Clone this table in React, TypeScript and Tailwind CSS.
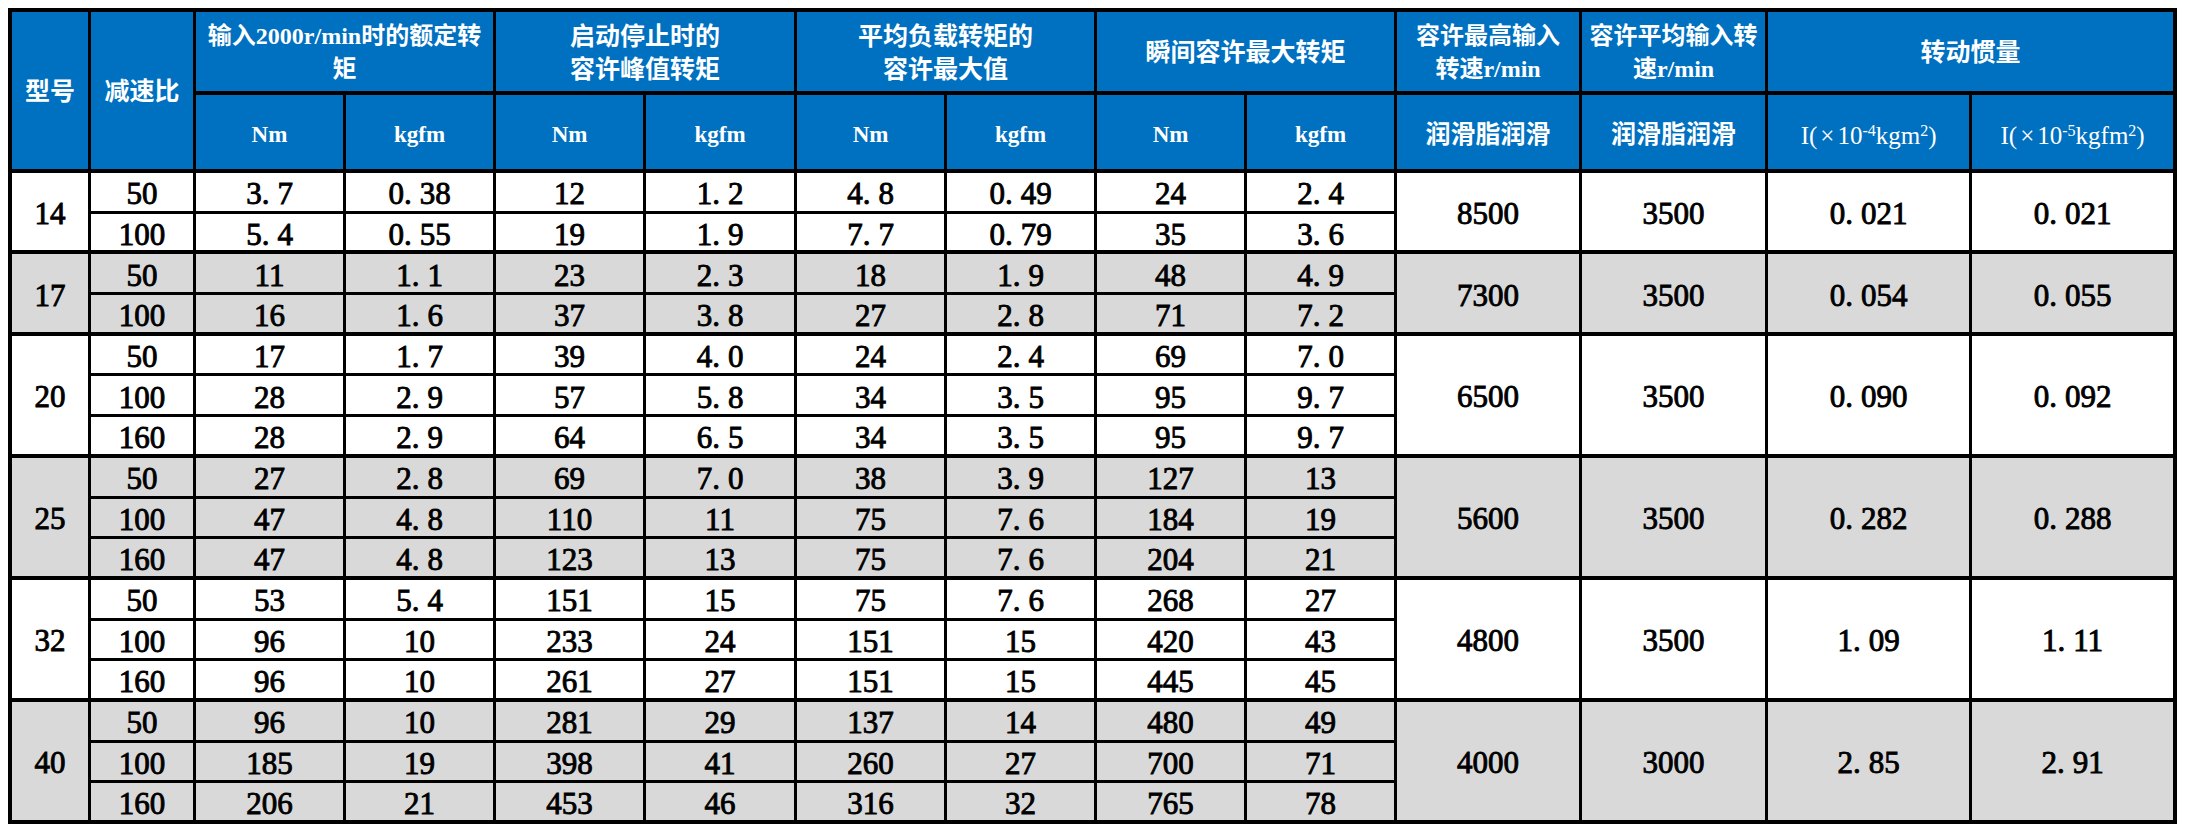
import React from 'react';

type Group = {
    model: string;
    gray: boolean;
    rows: string[][];
    merged: string[];
};

const groups: Group[] = [
    {
        model: '14',
        gray: false,
        rows: [
            ['50', '3.7', '0.38', '12', '1.2', '4.8', '0.49', '24', '2.4'],
            ['100', '5.4', '0.55', '19', '1.9', '7.7', '0.79', '35', '3.6'],
        ],
        merged: ['8500', '3500', '0.021', '0.021'],
    },
    {
        model: '17',
        gray: true,
        rows: [
            ['50', '11', '1.1', '23', '2.3', '18', '1.9', '48', '4.9'],
            ['100', '16', '1.6', '37', '3.8', '27', '2.8', '71', '7.2'],
        ],
        merged: ['7300', '3500', '0.054', '0.055'],
    },
    {
        model: '20',
        gray: false,
        rows: [
            ['50', '17', '1.7', '39', '4.0', '24', '2.4', '69', '7.0'],
            ['100', '28', '2.9', '57', '5.8', '34', '3.5', '95', '9.7'],
            ['160', '28', '2.9', '64', '6.5', '34', '3.5', '95', '9.7'],
        ],
        merged: ['6500', '3500', '0.090', '0.092'],
    },
    {
        model: '25',
        gray: true,
        rows: [
            ['50', '27', '2.8', '69', '7.0', '38', '3.9', '127', '13'],
            ['100', '47', '4.8', '110', '11', '75', '7.6', '184', '19'],
            ['160', '47', '4.8', '123', '13', '75', '7.6', '204', '21'],
        ],
        merged: ['5600', '3500', '0.282', '0.288'],
    },
    {
        model: '32',
        gray: false,
        rows: [
            ['50', '53', '5.4', '151', '15', '75', '7.6', '268', '27'],
            ['100', '96', '10', '233', '24', '151', '15', '420', '43'],
            ['160', '96', '10', '261', '27', '151', '15', '445', '45'],
        ],
        merged: ['4800', '3500', '1.09', '1.11'],
    },
    {
        model: '40',
        gray: true,
        rows: [
            ['50', '96', '10', '281', '29', '137', '14', '480', '49'],
            ['100', '185', '19', '398', '41', '260', '27', '700', '71'],
            ['160', '206', '21', '453', '46', '316', '32', '765', '78'],
        ],
        merged: ['4000', '3000', '2.85', '2.91'],
    },
];

// widths incl. right border
const colWidths = [
    'w-[79px]', 'w-[105px]', 'w-[150px]', 'w-[150px]', 'w-[150px]', 'w-[151px]', 'w-[150px]',
    'w-[150px]', 'w-[150px]', 'w-[150px]', 'w-[185px]', 'w-[186px]', 'w-[204px]', 'w-[205px]',
];

function Num({ value }: { value: string }) {
    const [a, b] = value.split('.');
    if (b === undefined) return <>{a}</>;
    return (
        <>
            {a}
            <span className="mr-[8px]">.</span>
            {b}
        </>
    );
}

const head =
    "bg-[#0070c0] text-white font-bold text-center align-middle border-r-[3px] border-black font-['Liberation_Serif','Noto_Sans_CJK_SC',serif]";

export default function App() {
    return (
        <div className="min-h-screen bg-white pl-[8px] pt-[8px]">
            <table className="table-fixed border-separate border-spacing-0 border-l-[4px] border-t-[4px] border-black w-[2169px]">
                <colgroup>
                    {colWidths.map((w, i) => (
                        <col key={i} className={w} />
                    ))}
                </colgroup>
                <thead>
                    <tr className="h-[83px]">
                        <th rowSpan={2} className={`${head} border-b-[4px] text-[25px] pt-[2px]`}>型号</th>
                        <th rowSpan={2} className={`${head} border-b-[4px] text-[25px] pt-[2px]`}>减速比</th>
                        <th colSpan={2} className={`${head} border-b-[4px] text-[24px] leading-[33px] pt-[3px] whitespace-nowrap`}>
                            输入2000r/min时的额定转
                            <br />矩
                        </th>
                        <th colSpan={2} className={`${head} border-b-[4px] text-[25px] leading-[33px] pt-[3px]`}>
                            启动停止时的
                            <br />
                            容许峰值转矩
                        </th>
                        <th colSpan={2} className={`${head} border-b-[4px] text-[25px] leading-[33px] pt-[3px]`}>
                            平均负载转矩的
                            <br />
                            容许最大值
                        </th>
                        <th colSpan={2} className={`${head} border-b-[4px] text-[25px] pt-[3px]`}>瞬间容许最大转矩</th>
                        <th className={`${head} border-b-[4px] text-[24px] leading-[33px] pt-[3px] whitespace-nowrap`}>
                            容许最高输入
                            <br />
                            转速r/min
                        </th>
                        <th className={`${head} border-b-[4px] text-[24px] leading-[33px] pt-[3px] whitespace-nowrap`}>
                            容许平均输入转
                            <br />
                            速r/min
                        </th>
                        <th colSpan={2} className={`${head} border-b-[4px] border-r-[4px] text-[25px] pt-[3px]`}>转动惯量</th>
                    </tr>
                    <tr className="h-[78px]">
                        {['Nm', 'kgfm', 'Nm', 'kgfm', 'Nm', 'kgfm', 'Nm', 'kgfm'].map((t, i) => (
                            <th key={i} className={`${head} border-b-[4px] text-[23px] pt-[6px]`}>
                                {t}
                            </th>
                        ))}
                        <th className={`${head} border-b-[4px] text-[25px] pt-[6px]`}>润滑脂润滑</th>
                        <th className={`${head} border-b-[4px] text-[25px] pt-[6px]`}>润滑脂润滑</th>
                        <th className={`${head} border-b-[4px] text-[25px] font-normal pt-[8px] whitespace-nowrap`}>
                            I(<span className="mx-[3px]">×</span>10<sup className="text-[16px]">-4</sup>kgm
                            <sup className="text-[16px]">2</sup>)
                        </th>
                        <th className={`${head} border-b-[4px] border-r-[4px] text-[25px] font-normal pt-[8px] whitespace-nowrap`}>
                            I(<span className="mx-[3px]">×</span>10<sup className="text-[16px]">-5</sup>kgfm
                            <sup className="text-[16px]">2</sup>)
                        </th>
                    </tr>
                </thead>
                <tbody className="font-['Liberation_Serif','Times_New_Roman',serif] text-[31px] text-black [-webkit-text-stroke:0.9px_black]">
                    {groups.map((g) =>
                        g.rows.map((row, i) => {
                            const bg = g.gray ? 'bg-[#d9d9d9]' : 'bg-white';
                            const last = i === g.rows.length - 1;
                            const cell = `${bg} text-center align-middle border-r-[3px] border-black pt-[4px] leading-none`;
                            return (
                                <tr key={`${g.model}-${i}`} className="h-[40.7px]">
                                    {i === 0 && (
                                        <td rowSpan={g.rows.length} className={`${cell} border-b-[4px]`}>
                                            {g.model}
                                        </td>
                                    )}
                                    {row.map((v, j) => (
                                        <td key={j} className={`${cell} ${last ? 'border-b-[4px]' : 'border-b-[3px]'}`}>
                                            <Num value={v} />
                                        </td>
                                    ))}
                                    {i === 0 &&
                                        g.merged.map((v, j) => (
                                            <td
                                                key={`m${j}`}
                                                rowSpan={g.rows.length}
                                                className={`${cell} border-b-[4px] ${j === 3 ? 'border-r-[4px]' : ''}`}
                                            >
                                                <Num value={v} />
                                            </td>
                                        ))}
                                </tr>
                            );
                        })
                    )}
                </tbody>
            </table>
        </div>
    );
}
